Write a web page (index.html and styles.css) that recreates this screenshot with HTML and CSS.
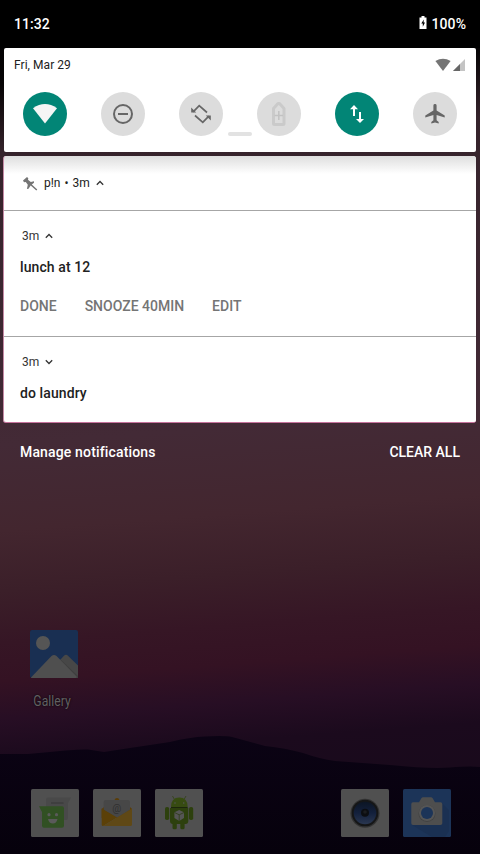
FILE: index.html
```html
<!DOCTYPE html>
<html lang="en">
<head>
<meta charset="utf-8">
<title>Notifications</title>
<link rel="stylesheet" href="styles.css">
</head>
<body>
<div class="phone">
  <svg class="wallpaper" viewBox="0 0 480 854" aria-hidden="true">
    <defs>
      <linearGradient id="sky" x1="208" y1="0" x2="272" y2="854" gradientUnits="userSpaceOnUse">
        <stop offset="0" stop-color="#000"/>
        <stop offset=".08" stop-color="#060405"/>
        <stop offset=".16" stop-color="#35232b"/>
        <stop offset=".5" stop-color="#432a36"/>
        <stop offset=".6" stop-color="#43262f"/>
        <stop offset=".67" stop-color="#3b1f29"/>
        <stop offset=".73" stop-color="#361625"/>
        <stop offset=".775" stop-color="#341223"/>
        <stop offset=".82" stop-color="#270e24"/>
        <stop offset=".865" stop-color="#1b0a1d"/>
        <stop offset="1" stop-color="#160a1a"/>
      </linearGradient>
      <linearGradient id="hill" x1="0" y1="0" x2="0" y2="1">
        <stop offset="0" stop-color="#0b0314"/>
        <stop offset="1" stop-color="#06010c"/>
      </linearGradient>
    </defs>
    <rect width="480" height="854" fill="url(#sky)"/>
    <path fill="url(#hill)" d="M0 754H28L50 752Q75 749 88 749.500L104 752L130 748L170 742Q190 737 205 736.500Q225 735.500 232 737L265 746Q285 748 303 753Q320 759 335 761L390 765Q430 769 450 767.500Q470 766 480 767V854H0Z"/>
  </svg>

  <header class="status">
    <span>11:32</span>
    <span class="battery">
      <svg width="8" height="13" viewBox="0 0 8 13"><path fill="#fff" d="M2.500 0H5.500V1.500H7.500V13H.5V1.500H2.500Z"/><path d="M4.800 3.500L2.300 7.600H3.800V10.800L6 6.600H4.600Z"/></svg>
      100%
    </span>
  </header>

  <section class="quick">
    <div class="quick-top">
      <span>Fri, Mar 29</span>
      <svg width="30" height="14" viewBox="0 0 30 14"><path fill="#757575" d="M.4 3Q8 -1.400 15.600 3L8 13Z"/><path fill="#c4c4c4" d="M30 1V13H18Z"/><path fill="#666" d="M25 6V13H18Z"/></svg>
    </div>
    <div class="tiles">
      <div class="tile on"><svg viewBox="0 0 44 44"><path fill="#f5f5f5" d="M10 16.200Q22 8 34 16.200L22 31.500Z"/></svg></div>
      <div class="tile"><svg viewBox="0 0 44 44"><g fill="none" stroke="#666" stroke-width="2"><circle cx="22" cy="22" r="9"/><path d="M17 22H27"/></g></svg></div>
      <div class="tile"><svg viewBox="0 0 44 44"><g fill="none" stroke="#666" stroke-width="1.700"><path d="M14.200 19.800L20.200 13.700L28 20.500M29.800 24.200L23.800 30.300L16 23.500"/></g><path fill="#666" d="M12.200 15.500V20.500H17.200ZM31.800 28.500V23.500H26.800Z"/></svg></div>
      <div class="tile"><svg viewBox="0 0 44 44"><path fill="none" stroke="#cacaca" stroke-width="3" stroke-linejoin="round" d="M21 11.500H22.500L27 16.500V31.500Q27 32.500 26 32.500H17.500Q16.500 32.500 16.500 31.500V16.500Z"/><path stroke="#c2c2c2" stroke-width="1.500" d="M17.500 23.500H26M21.800 19V28"/></svg></div>
      <div class="tile on"><svg viewBox="0 0 44 44"><path fill="#fff" d="M19 13L23 17.200H20V24H18V17.200H15ZM25 31L21 27H24V20H26V27H29Z"/></svg></div>
      <div class="tile"><svg viewBox="0 0 44 44"><path fill="#666" d="M31.700 25.400V23.400L23.600 18.500V13.400Q23.600 12 22 12T20.400 13.400V18.500L12.300 23.400V25.400L20.400 22.900V28.300L18.300 29.900V31.400L22 30.400L25.700 31.400V29.900L23.600 28.300V22.900Z"/></svg></div>
    </div>
    <i class="handle"></i>
  </section>

  <section class="notes">
    <div class="app-row">
      <svg class="pin" width="16" height="15" viewBox="0 0 16 15"><path fill="#757575" d="M1 4.500L5 1L6.300 2.300L6 3.800L8.800 6L12 5.200V6.700L9.800 8.500L15.300 13.600L14.300 14.400L8.700 9.600L6.500 12.800L4.900 13L5.800 8.700L3.800 6L2 6.200Z"/></svg>
      <span>p!n</span><span class="dot">•</span><span>3m</span>
      <svg class="chevron" width="8" height="6" viewBox="0 0 8 6"><path d="M.8 4.700L4 1.500L7.200 4.700"/></svg>
    </div>
    <article class="note lunch">
      <div class="meta"><span>3m</span><svg class="chevron" width="8" height="6" viewBox="0 0 8 6"><path d="M.8 4.700L4 1.500L7.200 4.700"/></svg></div>
      <h2>lunch at 12</h2>
      <div class="actions"><span>DONE</span><span>SNOOZE 40MIN</span><span>EDIT</span></div>
    </article>
    <article class="note">
      <div class="meta"><span>3m</span><svg class="chevron" width="8" height="6" viewBox="0 0 8 6"><path d="M.8 1.300L4 4.500L7.200 1.300"/></svg></div>
      <h2>do laundry</h2>
    </article>
  </section>

  <div class="footer"><span class="manage">Manage notifications</span><span>CLEAR ALL</span></div>

  <main class="home">
    <div class="app">
      <svg class="icon" viewBox="0 0 48 48"><rect width="48" height="48" rx="2" fill="#192f52"/><circle cx="13" cy="13" r="7" fill="#555"/><path fill="#474747" d="M29 31L34 25.700Q36 24 38 25.700L48 35.500V47H29Z"/><path fill="#3f3f3f" d="M31 30L48 46V48H29Z"/><path fill="#4f4f4f" d="M1 47.500L21.500 26Q24 24 26.500 26L47 47Q46.500 48 45.500 48H2Q1 48 1 47.500Z"/></svg>
      <span>Gallery</span>
    </div>
  </main>

  <nav class="dock">
    <svg class="icon" viewBox="0 0 48 48"><rect width="48" height="48" rx="1.500" fill="#505050"/><path fill="#494949" d="M15 10Q15 8.500 17 8.500H40L37 14V29Q37 31 35 31H15Z"/><path stroke="#363636" d="M20 14H32.500"/><path fill="#315023" d="M8 17.300H31Q33 17.300 33 19.300V36.700Q33 38.700 31 38.700H13Q11 38.700 11 36.700V23Z"/><g fill="#5a5a5a"><circle cx="18" cy="25.700" r="1.600"/><circle cx="25.500" cy="25.700" r="1.600"/><path d="M17 30H26.500Q25.500 34.500 21.800 34.500T17 30Z"/></g></svg>
    <svg class="icon" viewBox="0 0 48 48"><rect width="48" height="48" rx="1.500" fill="#505050"/><path fill="#5a3d08" d="M21.500 11Q22 9 24 9T26.500 11ZM8.700 20L11 18H37L39 20V29H8.700Z"/><path fill="#474747" d="M10.700 13Q10.700 11 12.700 11H35Q37 11 37 13V21L24 29L10.700 21Z"/><text x="23.800" y="23.200" text-anchor="middle" class="at">@</text><path fill="#5b4008" d="M8.700 19.500L24 28.500L10 37Q8.700 37 8.700 35.500Z"/><path fill="#5f4816" d="M39 19.500L10 37H37.500Q39 37 39 35.500Z"/></svg>
    <svg class="icon" viewBox="0 0 48 48"><rect width="48" height="48" rx="1.500" fill="#505050"/><path stroke="#36441b" stroke-width=".9" d="M19.500 10.500L17.500 7M29 10.500L31 7"/><path fill="#374b12" d="M16 18Q16 8.500 24.300 8.500T32.700 18Z"/><g fill="#2d400e"><rect x="10" y="18" width="4.200" height="13" rx="1.800"/><rect x="34" y="18" width="4.200" height="13" rx="1.800"/><rect x="17.500" y="32" width="4.300" height="8.300" rx="1.500"/><rect x="25.300" y="32" width="4.300" height="8.300" rx="1.500"/><path d="M15 19H33.300V32Q33.300 35 30.500 35H18Q15 35 15 32Z"/></g><path stroke="#1c260c" d="M16 18.500H32.700"/><g fill="#555"><circle cx="20" cy="14" r=".8"/><circle cx="28.700" cy="14" r=".8"/><path d="M24.200 21L29 23.300V29L24.200 32L19.400 29V23.300Z"/></g><path fill="none" stroke="#2d3b17" stroke-width=".8" d="M19.500 23.500L24.200 25.800L29 23.500M24.200 25.800V32"/></svg>
    <svg class="icon speaker" viewBox="0 0 48 48"><defs><linearGradient id="cone" x1="0" y1="0" x2="0" y2="1"><stop offset="0" stop-color="#0c1524"/><stop offset=".5" stop-color="#13203c"/><stop offset="1" stop-color="#2a3750"/></linearGradient></defs><rect width="48" height="48" rx="1.500" fill="#505050"/><circle cx="24" cy="24.300" r="14.500" fill="#343434"/><circle cx="24" cy="24" r="13.300" fill="#151617"/><circle cx="24" cy="24" r="11.300" fill="url(#cone)"/><circle cx="24" cy="23.800" r="4" fill="#0c0e12"/><circle cx="24" cy="23" r="1.800" fill="#1b1d20"/></svg>
    <svg class="icon" viewBox="0 0 48 48"><rect width="48" height="48" rx="1.500" fill="#1c3458"/><path fill="#1a3052" d="M39 14L46 21V42L42 48H29L9 36Z"/><path fill="#4e4e4e" d="M10 13.300H16L18.500 9Q19 8.300 20 8.300H28Q29 8.300 29.500 9L32 13.300H37.500Q39.300 13.300 39.300 15V34.300Q39.300 36 37.500 36H10Q8.300 36 8.300 34.300V15Q8.300 13.300 10 13.300Z"/><circle cx="24" cy="24.500" r="8.500" fill="#424242"/><circle cx="24" cy="24" r="8" fill="#555"/><circle cx="24" cy="24" r="6" fill="#1c3458"/></svg>
  </nav>
</div>
</body>
</html>
```
FILE: styles.css
```css
* {
  box-sizing: border-box;
}

body {
  margin: 0;
  background: #000;
  font-family: Roboto, "Liberation Sans", sans-serif;
}

svg {
  display: block;
}

.phone {
  position: relative;
  isolation: isolate;
  display: flex;
  flex-direction: column;
  width: 480px;
  height: 854px;
  overflow: hidden;
}

.wallpaper {
  position: absolute;
  inset: 0;
  z-index: -1;
  width: 480px;
  height: 854px;
}

.status {
  display: flex;
  flex: none;
  align-items: center;
  justify-content: space-between;
  height: 48px;
  padding: 0 14px;
  background: #000;
  color: #fff;
  font-size: 14px;
  font-weight: 500;
  letter-spacing: .05px;
}

.battery {
  display: flex;
  align-items: center;
  gap: 5px;
}

.battery svg {
  margin-bottom: 3px;
}

.quick {
  flex: none;
  height: 104px;
  margin: 0 4px 4px;
  border-radius: 2px;
  background: #fff;
}

.quick-top {
  display: flex;
  align-items: center;
  justify-content: space-between;
  height: 34px;
  padding: 0 11px 0 10px;
  color: #212121;
  font-size: 12px;
  letter-spacing: .05px;
}

.tiles {
  display: flex;
  justify-content: space-between;
  margin-top: 10px;
  padding: 0 19px;
}

.tile {
  width: 44px;
  height: 44px;
  border-radius: 50%;
  background: #dcdcdc;
}

.tile.on {
  background: #028576;
}

.handle {
  display: block;
  width: 24px;
  height: 4px;
  margin: -4px auto 0;
  border-radius: 2px;
  background: #e2e2e2;
}

.notes {
  flex: none;
  height: 267px;
  margin: 0 4px 0 3px;
  border-bottom: 1px solid #c6729c;
  border-left: 1px solid #c58aa5;
  border-radius: 3px;
  background: #fff linear-gradient(#dedede, #fff 18px) no-repeat;
  color: #212121;
}

.app-row {
  display: flex;
  align-items: center;
  height: 54px;
  padding-left: 18px;
  font-size: 12px;
}

.pin {
  margin-right: 6px;
}

.dot {
  margin: 0 4px;
}

.chevron {
  margin-left: 6px;
  fill: none;
  stroke: #333;
  stroke-width: 1.3;
}

.note {
  height: 86px;
  padding: 17px 16px 0;
  border-top: 1px solid #a6a6a6;
}

.lunch {
  height: 126px;
}

.meta {
  display: flex;
  align-items: center;
  height: 16px;
  padding-left: 2px;
  color: #333;
  font-size: 12px;
}

.note h2 {
  margin: 13px 0 0;
  font-size: 14px;
  font-weight: 500;
  letter-spacing: .1px;
  line-height: 20px;
}

.actions {
  display: flex;
  gap: 28px;
  margin-top: 19px;
  color: #757575;
  font-size: 14px;
  font-weight: 500;
  line-height: 20px;
}

.footer {
  display: flex;
  flex: none;
  justify-content: space-between;
  padding: 19px 20px 0;
  color: #fff;
  font-size: 14px;
  font-weight: 500;
  line-height: 20px;
}

.manage {
  letter-spacing: .15px;
}

.home {
  display: flex;
  flex: 1;
  align-items: flex-end;
  padding: 0 30px 78px;
}

.icon {
  width: 48px;
  height: 48px;
}

.app span {
  display: block;
  width: 44px;
  margin-top: 13px;
  color: #626062;
  font-size: 14px;
  line-height: 20px;
  text-align: center;
  text-shadow: 0 0 2px #000;
  transform: scaleX(.87);
}

.dock {
  display: flex;
  flex: none;
  gap: 14px;
  padding: 0 29px 17px 31px;
}

.speaker {
  margin-left: auto;
}

.at {
  fill: #303030;
  font-size: 10px;
}
```
